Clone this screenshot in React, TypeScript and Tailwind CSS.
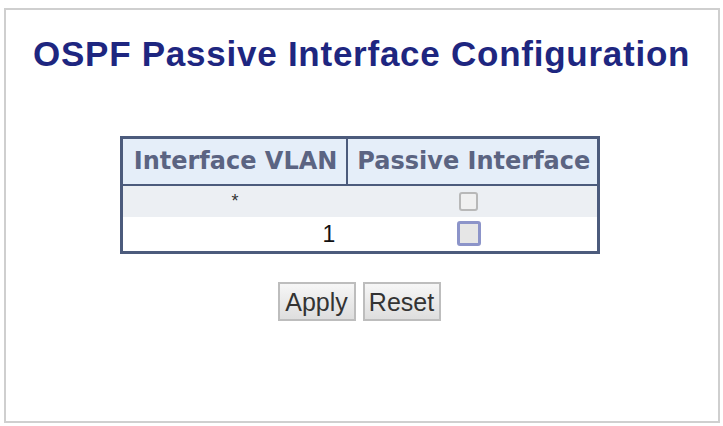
export default function App() {
  return (
    <div className="w-[723px] h-[426px] bg-white pt-[8px] pl-[4px]">
      <div className="w-[716px] h-[415px] border-2 border-[#cfcfcf] bg-white">
        <h1 className="pl-[27px] pt-[24px] text-[35px] leading-[40px] tracking-[0.75px] font-bold text-[#1e2680] font-['Liberation_Sans',Arial,sans-serif]">
          OSPF Passive Interface Configuration
        </h1>
        <div className="flex justify-center mt-[62px] pr-[4px]">
          <table className="border-[3px] border-[#4c5b7c] border-collapse font-['DejaVu_Sans',Verdana,sans-serif]">
            <thead>
              <tr className="bg-[#e5eef9] h-[47px]">
                <th className="pl-[11px] pr-[9px] border-r-2 border-b-2 border-[#4c5b7c] text-[24px] font-bold text-[#5b6482] whitespace-nowrap">
                  Interface VLAN
                </th>
                <th className="pl-[9px] pr-[7px] border-b-2 border-[#4c5b7c] text-[24px] font-bold text-[#5b6482] whitespace-nowrap">
                  Passive Interface
                </th>
              </tr>
            </thead>
            <tbody>
              <tr className="bg-[#eceff3] h-[32px]">
                <td className="text-center text-[18px] text-[#333] font-['Liberation_Sans',Arial,sans-serif]">*</td>
                <td className="text-center pr-[8px]">
                  <span className="inline-block w-[19px] h-[19px] align-middle border-2 border-[#b8b8b8] rounded-[3px] bg-[#f0f0f0]" />
                </td>
              </tr>
              <tr className="bg-white h-[32px]">
                <td className="text-right pr-[12px] text-[23px] text-[#111] font-['Liberation_Sans',Arial,sans-serif]">1</td>
                <td className="text-center pr-[6px]">
                  <span className="inline-block w-[24px] h-[25px] align-middle border-[3px] border-[#8c94c9] rounded-[3px] bg-[#e6e6e6]" />
                </td>
              </tr>
            </tbody>
          </table>
        </div>
        <div className="flex justify-center gap-[7px] mt-[28px] pr-[6px] font-['Liberation_Sans',Arial,sans-serif]">
          <button className="h-[39px] w-[78px] border-2 border-[#bdbdbd] bg-gradient-to-b from-[#f6f6f6] to-[#dedede] text-[25px] text-[#333]">
            Apply
          </button>
          <button className="h-[39px] w-[78px] border-2 border-[#bdbdbd] bg-gradient-to-b from-[#f6f6f6] to-[#dedede] text-[25px] text-[#333]">
            Reset
          </button>
        </div>
      </div>
    </div>
  );
}
